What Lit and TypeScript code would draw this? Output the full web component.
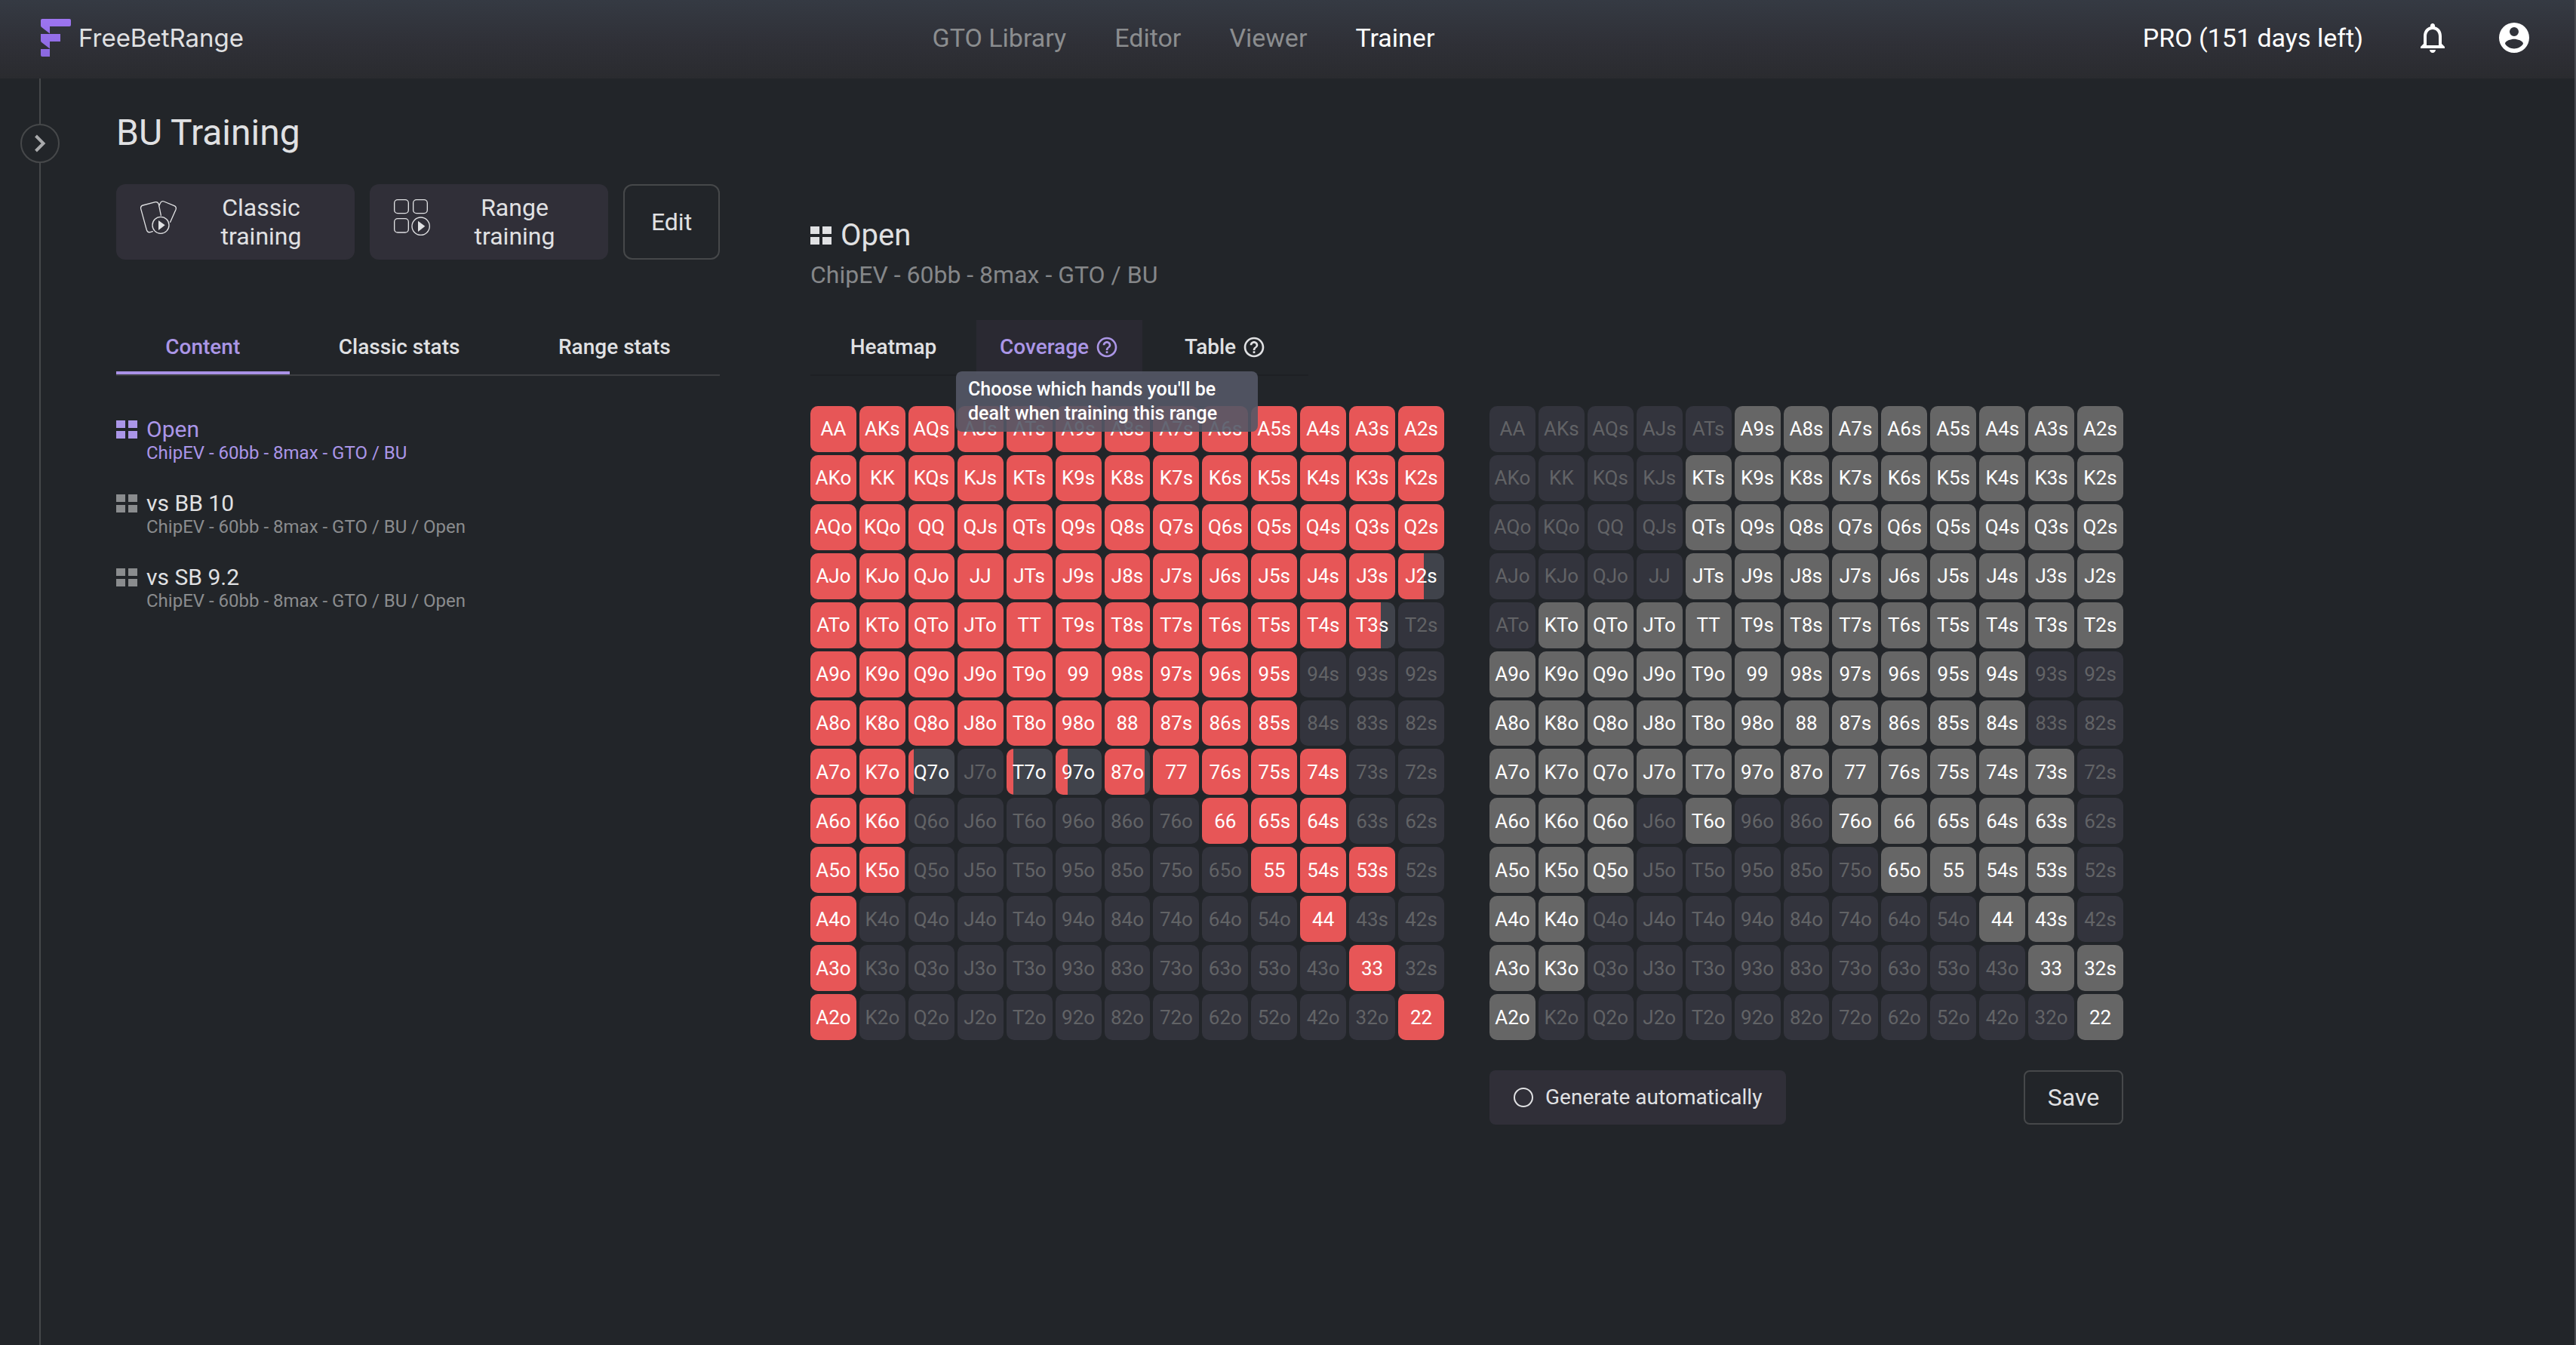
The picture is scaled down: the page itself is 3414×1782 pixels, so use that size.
import { LitElement, html, css, svg } from "lit";
import { customElement, property, state } from "lit/decorators.js";
import { classMap } from "lit/directives/class-map.js";
import { styleMap } from "lit/directives/style-map.js";

const RANKS = "AKQJT98765432".split("");

const handName = (row: number, col: number): string => {
  if (row === col) return RANKS[row] + RANKS[row];
  return row < col ? `${RANKS[row]}${RANKS[col]}s` : `${RANKS[col]}${RANKS[row]}o`;
};

/* One line per matrix row: 1 = selected, 0 = not. */
const OPEN_RANGE = [
  "1111111111111",
  "1111111111111",
  "1111111111111",
  "1111111111111",
  "1111111111110",
  "1111111111000",
  "1111111111000",
  "1110111111100",
  "1100000011100",
  "1100000001110",
  "1000000000100",
  "1000000000010",
  "1000000000001",
];

/* Hands that are opened only part of the time, in percent. */
const PARTIAL: Record<string, number> = {
  J2s: 56,
  T3s: 69,
  Q7o: 12,
  T7o: 16,
  "97o": 27,
  "87o": 88,
  K5o: 98,
};

const COVERAGE = [
  "0000011111111",
  "0000111111111",
  "0000111111111",
  "0000111111111",
  "0111111111111",
  "1111111111100",
  "1111111111100",
  "1111111111110",
  "1110100111110",
  "1110000011110",
  "1100000000110",
  "1100000000011",
  "1000000000001",
];

const gridIcon = html`<svg class="grid-icon" viewBox="0 0 28 24" aria-hidden="true">
  <path d="M0 0h12v10H0zM16 0h12v10H16zM0 14h12v10H0zM16 14h12v10H16z" fill="currentColor" />
</svg>`;

const helpIcon = svg`<svg class="help-icon" viewBox="0 0 24 24" aria-hidden="true">
  <path fill="currentColor" d="M11 18h2v-2h-2v2zm1-16C6.48 2 2 6.48 2 12s4.48 10 10 10 10-4.48 10-10S17.52 2 12 2zm0 18c-4.41 0-8-3.59-8-8s3.59-8 8-8 8 3.59 8 8-3.59 8-8 8zm0-14c-2.21 0-4 1.79-4 4h2c0-1.1.9-2 2-2s2 .9 2 2c0 2-3 1.75-3 5h2c0-2.25 3-2.5 3-5 0-2.21-1.79-4-4-4z"/>
</svg>`;

const baseStyles = css`
  *,
  *::before,
  *::after {
    box-sizing: border-box;
  }
  button,
  input {
    font: inherit;
    color: inherit;
    margin: 0;
  }
  button {
    background: none;
    border: 0;
    padding: 0;
    cursor: pointer;
  }
  a {
    color: inherit;
    text-decoration: none;
  }
  svg {
    display: block;
    flex: none;
  }
`;

@customElement("fbr-header")
export class FbrHeader extends LitElement {
  static styles = [
    baseStyles,
    css`
      :host {
        display: block;
      }
      .bar {
        display: flex;
        align-items: center;
        justify-content: space-between;
        height: 104px;
        padding: 0 56px 4px 54px;
        font-size: 34px;
        line-height: 40px;
        background: linear-gradient(#353a43, #2f3037 55%, #2a2b2f);
      }
      .brand {
        display: flex;
        align-items: center;
        gap: 10px;
        font-family: Inter, Roboto, sans-serif;
        font-size: 33px;
        color: #e0e1e3;
      }
      .logo {
        width: 40px;
        height: 50px;
      }
      .nav {
        display: flex;
        gap: 64px;
        margin-right: 26px;
        color: #8b8d8f;
      }
      .current {
        color: #fff;
      }
      .account {
        display: flex;
        align-items: center;
        color: #fff;
      }
      .icon-button {
        margin-left: 60px;
      }
      .bell {
        margin-left: 68px;
      }
      .icon {
        width: 48px;
        height: 48px;
      }
    `,
  ];

  render() {
    return html`<header class="bar">
      <a class="brand" href="#home">
        <svg class="logo" viewBox="0 0 40 50" aria-hidden="true">
          <defs>
            <linearGradient id="mark" x1="0" y1="0" x2="0" y2="50" gradientUnits="userSpaceOnUse">
              <stop offset="0" stop-color="#9d75f0" />
              <stop offset="1" stop-color="#8a68e0" />
            </linearGradient>
          </defs>
          <path
            fill="url(#mark)"
            d="M2 0H38Q40 0 40 2V8Q40 10 38 10H12V19.5L1 11Q0 10 0 9V2Q0 0 2 0ZM0 20H26V30H12V39.5L1 31Q0 30 0 29ZM0 40H12V50H2Q0 50 0 48Z"
          />
        </svg>
        <span>FreeBetRange</span>
      </a>
      <nav class="nav" aria-label="Main">
        <a href="#library">GTO Library</a>
        <a href="#editor">Editor</a>
        <a href="#viewer">Viewer</a>
        <a href="#trainer" class="current" aria-current="page">Trainer</a>
      </nav>
      <div class="account">
        <span>PRO (151 days left)</span>
        <button class="icon-button bell" aria-label="Notifications">
          <svg class="icon" viewBox="0 0 24 24" aria-hidden="true">
            <path
              fill="currentColor"
              d="M12 22c1.1 0 2-.9 2-2h-4c0 1.1.9 2 2 2zm6-6v-5c0-3.07-1.63-5.64-4.5-6.32V4c0-.83-.67-1.5-1.5-1.5s-1.5.67-1.5 1.5v.68C7.64 5.36 6 7.92 6 11v5l-2 2v1h16v-1l-2-2zm-2 1H8v-6c0-2.48 1.51-4.5 4-4.5s4 2.02 4 4.5v6z"
            />
          </svg>
        </button>
        <button class="icon-button" aria-label="Account">
          <svg class="icon" viewBox="0 0 24 24" aria-hidden="true">
            <path
              fill="currentColor"
              fill-rule="evenodd"
              d="M12 2a10 10 0 1 0 0 20 10 10 0 0 0 0-20zM12 5a3 3 0 1 1 0 6 3 3 0 0 1 0-6zM12 19.2c-2.5 0-4.71-1.28-6-3.22.03-1.99 4-3.08 6-3.08s5.97 1.09 6 3.08c-1.29 1.94-3.5 3.22-6 3.22z"
            />
          </svg>
        </button>
      </div>
    </header>`;
  }
}

@customElement("hand-matrix")
export class HandMatrix extends LitElement {
  @property({ attribute: false }) rows: string[] = [];
  @property({ attribute: false }) partial: Record<string, number> = {};
  @property({ type: Boolean }) editable = false;
  @property() label = "";

  static styles = [
    baseStyles,
    css`
      :host {
        display: block;
      }
      .matrix {
        display: grid;
        grid-template-columns: repeat(13, minmax(0, 1fr));
        gap: 4px;
      }
      .cell {
        display: flex;
        align-items: center;
        justify-content: center;
        position: relative;
        aspect-ratio: 1;
        overflow: hidden;
        border-radius: 10px;
        font-size: 26px;
        line-height: 32px;
        background: #33343d;
        color: #626366;
      }
      .on {
        color: #fff;
        background: #40434b;
      }
      .picked {
        color: #fff;
        background: #666;
      }
      .fill {
        position: absolute;
        inset: 0 auto 0 0;
        background: #e75657;
      }
      .name {
        position: relative;
      }
    `,
  ];

  private toggle(row: number, col: number) {
    this.rows = this.rows.map((line, r) =>
      r === row ? line.slice(0, col) + (line[col] === "1" ? "0" : "1") + line.slice(col + 1) : line
    );
  }

  private cell(row: number, col: number) {
    const name = handName(row, col);
    const on = this.rows[row][col] === "1";
    if (this.editable) {
      return html`<button
        class=${classMap({ cell: true, picked: on })}
        aria-pressed=${on ? "true" : "false"}
        @click=${() => this.toggle(row, col)}
      >
        ${name}
      </button>`;
    }
    return html`<div class=${classMap({ cell: true, on })}>
      ${on
        ? html`<span class="fill" style=${styleMap({ width: `${this.partial[name] ?? 100}%` })}></span>`
        : null}
      <span class="name">${name}</span>
    </div>`;
  }

  render() {
    return html`<div class="matrix" role="group" aria-label=${this.label}>
      ${RANKS.map((_, row) => RANKS.map((__, col) => this.cell(row, col)))}
    </div>`;
  }
}

@customElement("app-root")
export class AppRoot extends LitElement {
  @state() private selected = 0;

  private spots = [
    { name: "Open", path: "ChipEV - 60bb - 8max - GTO / BU" },
    { name: "vs BB 10", path: "ChipEV - 60bb - 8max - GTO / BU / Open" },
    { name: "vs SB 9.2", path: "ChipEV - 60bb - 8max - GTO / BU / Open" },
  ];

  static styles = [
    baseStyles,
    css`
      :host {
        display: block;
        font-family: Roboto, "Liberation Sans", sans-serif;
        color: #e0e1e3;
      }
      .page {
        display: flex;
        flex-direction: column;
        min-height: 100vh;
        background: #222529;
        border-right: 2px solid #494a50;
      }
      .body {
        display: flex;
        flex: 1;
      }
      .rail {
        display: flex;
        flex-direction: column;
        align-items: center;
        width: 106px;
        flex: none;
      }
      .rail::before,
      .rail::after {
        content: "";
        width: 2px;
        background: #46484a;
      }
      .rail::before {
        height: 60px;
      }
      .rail::after {
        flex: 1;
      }
      .expand {
        display: grid;
        place-items: center;
        width: 52px;
        height: 52px;
        border: 2px solid #46484a;
        border-radius: 50%;
        color: #a9aaac;
      }
      .chevron {
        width: 16px;
        height: 24px;
      }
      .main {
        display: flex;
        flex: 1;
        gap: 120px;
        padding: 0 48px 48px;
      }
      .side {
        width: 800px;
        padding-top: 44px;
      }
      .title {
        margin: 0 0 40px;
        font-size: 48px;
        line-height: 56px;
        font-weight: 400;
      }
      .modes {
        display: flex;
        gap: 20px;
        margin-bottom: 80px;
        font-size: 32px;
        line-height: 38px;
      }
      .mode {
        display: flex;
        flex: 1;
        align-items: flex-start;
        gap: 20px;
        padding: 12px 32px;
        border-radius: 12px;
        background: #302f38;
      }
      .mode-icon {
        width: 48px;
        height: 48px;
        margin-top: 8px;
        overflow: visible;
      }
      .mode-label {
        flex: 1;
      }
      .outlined {
        border: 2px solid #46484a;
        border-radius: 12px;
      }
      .edit {
        width: 128px;
      }
      .tabs {
        display: flex;
        border-bottom: 2px solid #3c3e41;
        font-size: 28px;
        line-height: 32px;
        font-weight: 500;
      }
      .tab {
        display: flex;
        flex: 1 1 auto;
        align-items: center;
        justify-content: center;
        gap: 8px;
        height: 72px;
        border-top: 4px solid transparent;
        border-bottom: 4px solid transparent;
      }
      .active {
        color: #ab96e6;
      }
      .underlined {
        border-bottom-color: #a991e6;
      }
      .spots {
        display: flex;
        flex-direction: column;
        gap: 36px;
        margin: 53px 0 0;
        padding: 0;
        list-style: none;
      }
      .spot {
        display: grid;
        grid-template-columns: 28px auto;
        column-gap: 12px;
        align-items: center;
        text-align: left;
        color: #8a8c8e;
      }
      .grid-icon {
        width: 28px;
        height: 24px;
      }
      .spot-name {
        font-size: 30px;
        line-height: 36px;
        color: #e0e1e3;
      }
      .spot-path {
        grid-column: 2;
        font-size: 24px;
        line-height: 26px;
      }
      .chosen,
      .chosen .spot-name {
        color: #ab96e8;
      }
      .detail {
        flex: 1;
        min-width: 0;
        max-width: 1740px;
        padding-top: 184px;
      }
      .heading {
        display: flex;
        align-items: center;
        gap: 12px;
        margin: 0 0 8px;
        font-size: 40px;
        line-height: 48px;
        font-weight: 400;
      }
      .path {
        margin: 0 0 40px;
        font-size: 32px;
        line-height: 40px;
        color: #858789;
      }
      .views {
        width: 660px;
        border-bottom-color: #1e2024;
      }
      .view {
        flex: 1 1 0;
      }
      .hovered {
        background: #2a2932;
      }
      .help {
        position: relative;
      }
      .help-icon {
        width: 32px;
        height: 32px;
      }
      .tooltip {
        position: absolute;
        z-index: 1;
        top: 48px;
        left: -184px;
        width: 400px;
        padding: 8px 16px;
        border-radius: 8px;
        background: rgba(84, 88, 102, 0.9);
        color: #fff;
        font-size: 25px;
        text-align: left;
      }
      .columns {
        display: grid;
        grid-template-columns: 1fr 1fr;
        gap: 40px 60px;
        margin-top: 40px;
      }
      .actions {
        display: flex;
        grid-column: 2;
        justify-content: space-between;
      }
      .auto {
        display: flex;
        align-items: center;
        gap: 16px;
        height: 72px;
        padding: 0 32px;
        border-radius: 8px;
        background: #302f38;
        font-size: 28px;
      }
      .check {
        appearance: none;
        width: 26px;
        height: 26px;
        border: 2px solid #e0e1e3;
        border-radius: 50%;
      }
      .save {
        width: 132px;
        height: 72px;
        border-radius: 8px;
        font-size: 32px;
      }
    `,
  ];

  private classicIcon = html`<svg class="mode-icon" viewBox="558 792 144 144" aria-hidden="true">
    <g fill="none" stroke="currentColor" stroke-width="4" stroke-linecap="round" stroke-linejoin="round">
      <path
        d="M607 920L597 923Q586 925 583 914L560 830Q558 819 568 816L618 803Q628 801 631 812L640 856M632 820L637 808Q642 797 652 801L693 818Q703 823 699 833L677 883"
      />
      <circle cx="639" cy="895" r="33" />
    </g>
    <path d="M630 876L656 895L630 915Z" fill="currentColor" />
  </svg>`;

  private rangeIcon = html`<svg class="mode-icon" viewBox="126 132 144 144" aria-hidden="true">
    <g fill="none" stroke="currentColor" stroke-width="4">
      <rect x="128" y="134" width="56" height="54" rx="13" />
      <rect x="203" y="134" width="56" height="54" rx="13" />
      <rect x="128" y="209" width="56" height="55" rx="13" />
      <circle cx="233" cy="239" r="35" />
    </g>
    <path d="M222 218L250 239L222 261Z" fill="currentColor" />
  </svg>`;

  render() {
    return html`<div class="page">
      <fbr-header></fbr-header>
      <div class="body">
        <div class="rail">
          <button class="expand" aria-label="Expand sidebar">
            <svg class="chevron" viewBox="0 0 16 24" aria-hidden="true">
              <path d="M2.5 2L12.5 12L2.5 22" fill="none" stroke="currentColor" stroke-width="4" />
            </svg>
          </button>
        </div>
        <main class="main">
          <section class="side">
            <h1 class="title">BU Training</h1>
            <div class="modes">
              <button class="mode">${this.classicIcon}<span class="mode-label">Classic training</span></button>
              <button class="mode">${this.rangeIcon}<span class="mode-label">Range training</span></button>
              <button class="outlined edit">Edit</button>
            </div>
            <div class="tabs" role="tablist">
              <button class="tab active underlined" role="tab" aria-selected="true">Content</button>
              <button class="tab" role="tab" aria-selected="false">Classic stats</button>
              <button class="tab" role="tab" aria-selected="false">Range stats</button>
            </div>
            <ul class="spots">
              ${this.spots.map(
                (spot, index) => html`<li>
                  <button
                    class=${classMap({ spot: true, chosen: index === this.selected })}
                    @click=${() => (this.selected = index)}
                  >
                    ${gridIcon}
                    <span class="spot-name">${spot.name}</span>
                    <span class="spot-path">${spot.path}</span>
                  </button>
                </li>`
              )}
            </ul>
          </section>
          <section class="detail">
            <h2 class="heading">${gridIcon}<span>Open</span></h2>
            <p class="path">ChipEV - 60bb - 8max - GTO / BU</p>
            <div class="tabs views" role="tablist">
              <button class="tab view" role="tab" aria-selected="false">Heatmap</button>
              <button class="tab view active hovered" role="tab" aria-selected="true" aria-describedby="tip">
                <span>Coverage</span>
                <span class="help"
                  >${helpIcon}<span class="tooltip" id="tip" role="tooltip"
                    >Choose which hands you'll be dealt when training this range</span
                  ></span
                >
              </button>
              <button class="tab view" role="tab" aria-selected="false">
                <span>Table</span><span class="help">${helpIcon}</span>
              </button>
            </div>
            <div class="columns">
              <hand-matrix label="Range" .rows=${OPEN_RANGE} .partial=${PARTIAL}></hand-matrix>
              <hand-matrix label="Coverage" editable .rows=${COVERAGE}></hand-matrix>
              <div class="actions">
                <label class="auto"><input class="check" type="checkbox" />Generate automatically</label>
                <button class="outlined save">Save</button>
              </div>
            </div>
          </section>
        </main>
      </div>
    </div>`;
  }
}
